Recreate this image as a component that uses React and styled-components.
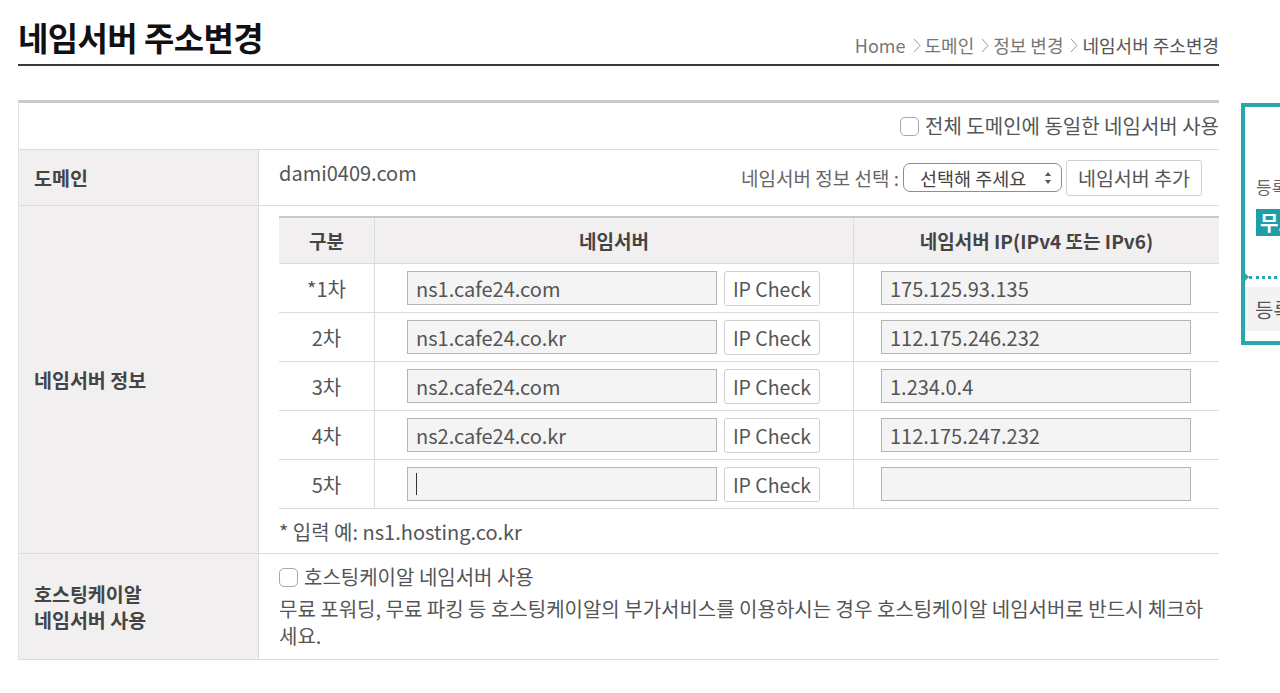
import React from "react";
import styled, { createGlobalStyle } from "styled-components";

const GlobalStyle = createGlobalStyle`
  html, body {
    margin: 0;
    padding: 0;
    background: #fff;
    overflow: hidden;
  }
  body {
    font-family: "Noto Sans CJK KR", "Noto Sans", sans-serif;
    color: #555;
  }
`;

const Page = styled.div`
  display: flex;
  align-items: flex-start;
  padding-left: 18px;
  width: 1500px;
`;

const Main = styled.div`
  width: 1201px;
  flex-shrink: 0;
`;

const Header = styled.div`
  display: flex;
  align-items: flex-end;
  justify-content: space-between;
  height: 66px;
  border-bottom: 2px solid #3a3a3a;
  box-sizing: border-box;
  padding-bottom: 6px;
`;

const Title = styled.h1`
  margin: 0;
  font-size: 33px;
  font-weight: 700;
  letter-spacing: -0.6px;
  color: #111;
  line-height: 42px;
`;

const Breadcrumb = styled.div`
  display: flex;
  align-items: center;
  gap: 3px;
  font-size: 18px;
  color: #777;
  line-height: 24px;
  padding-bottom: 1px;

  span:last-child {
    color: #555;
  }

  svg {
    margin: 0 1px 0 4px;
  }
`;

const Board = styled.div`
  margin-top: 34px;
  border-top: 3px solid #c9c9c9;
  border-left: 1px solid #e2e2e2;
`;

const TopRow = styled.div`
  height: 46px;
  border-bottom: 1px solid #dcdcdc;
  display: flex;
  align-items: center;
  justify-content: flex-end;
`;

const Row = styled.div`
  display: grid;
  grid-template-columns: 240px 1fr;
  border-bottom: 1px solid #dcdcdc;
  min-height: ${(props) => props.height}px;
`;

const Label = styled.div`
  background: #f1efef;
  border-right: 1px solid #dcdcdc;
  display: flex;
  align-items: center;
  padding-left: 15px;
  font-size: 19.5px;
  font-weight: 700;
  color: #444;
  line-height: 26px;
`;

const Value = styled.div`
  padding: ${(props) => props.pad || "0 0 0 20px"};
  display: flex;
  flex-direction: column;
  justify-content: ${(props) => (props.top ? "flex-start" : "center")};
  font-size: 20px;
  color: #555;
`;

const DomainLine = styled.div`
  display: flex;
  align-items: center;
  justify-content: space-between;
  padding-right: 17px;
`;

const DomainName = styled.span`
  margin-top: -10px;
  font-size: 20px;
  color: #555;
`;

const Picker = styled.div`
  display: flex;
  align-items: center;
  font-size: 19px;
  color: #666;
`;

const Select = styled.div`
  width: 159px;
  height: 29px;
  box-sizing: border-box;
  border: 1px solid #8d8d8d;
  border-radius: 7px;
  margin-left: 4px;
  display: flex;
  align-items: center;
  justify-content: space-between;
  padding: 0 9px 0 16px;
  font-size: 18.5px;
  color: #444;
  background: #fff;
`;

const Button = styled.button`
  height: ${(props) => props.h || 35}px;
  width: ${(props) => props.w}px;
  box-sizing: border-box;
  border: 1px solid #cfcfcf;
  border-radius: 3px;
  background: #fff;
  font-family: inherit;
  font-size: 19.5px;
  color: #555;
  padding: 0;
  margin-left: ${(props) => props.ml || 0}px;
  flex-shrink: 0;
`;

const CheckLabel = styled.label`
  display: flex;
  align-items: center;
  gap: 6px;
  font-size: 20px;
  color: #555;
  line-height: 26px;
`;

const CheckBox = styled.span`
  width: 19px;
  height: 19px;
  box-sizing: border-box;
  border: 1px solid #a8a8a8;
  border-radius: 5px;
  background: #fff;
  display: inline-block;
`;

const Grid = styled.div`
  margin-top: 10px;
  border-top: 2px solid #c9c9c9;
`;

const GridRow = styled.div`
  display: grid;
  grid-template-columns: 96px 479px 1fr;
  height: ${(props) => (props.head ? 45 : 48)}px;
  border-bottom: 1px solid #dcdcdc;
  background: ${(props) => (props.head ? "#f1efef" : "#fff")};
  font-weight: ${(props) => (props.head ? 700 : 400)};
  color: ${(props) => (props.head ? "#444" : "#555")};
`;

const Cell = styled.div`
  display: flex;
  align-items: center;
  justify-content: ${(props) => (props.left ? "flex-start" : "center")};
  padding-left: ${(props) => props.pl || 0}px;
  border-right: ${(props) => (props.last ? "none" : "1px solid #dcdcdc")};
  font-size: ${(props) => (props.head ? 19 : 20)}px;
`;

const Field = styled.div`
  width: 310px;
  height: 34px;
  box-sizing: border-box;
  border: 1px solid #b4b4b4;
  background: #f4f4f4;
  display: flex;
  align-items: center;
  padding-left: 8px;
  font-size: 20px;
  color: #555;
  flex-shrink: 0;
`;

const Caret = styled.span`
  width: 1px;
  height: 22px;
  background: #333;
`;

const Note = styled.div`
  height: 44px;
  display: flex;
  align-items: center;
  font-size: 20px;
  color: #555;
`;

const Desc = styled.p`
  margin: 5px 0 0;
  font-size: 20px;
  line-height: 27px;
  color: #555;
  padding-right: 2px;
`;

const Side = styled.div`
  margin-left: 22px;
  margin-top: 103px;
  width: 220px;
  height: 242px;
  box-sizing: border-box;
  border: 4px solid #26a8ad;
  flex-shrink: 0;
  padding: 67px 10px 0 11px;
  font-size: 17px;
  color: #666;
`;

const SideBadge = styled.div`
  margin-top: 10px;
  background: #1f9ea8;
  color: #fff;
  font-weight: 700;
  font-size: 20px;
  height: 27px;
  line-height: 27px;
  padding-left: 4px;
`;

const SideDots = styled.div`
  margin: 40px -10px 0 -7px;
  border-top: 3px dotted #26a8ad;
  position: relative;

  &::before {
    content: "";
    position: absolute;
    left: -5px;
    top: -7px;
    border-top: 5px solid transparent;
    border-bottom: 5px solid transparent;
    border-left: 5px solid #26a8ad;
  }
`;

const SideFoot = styled.div`
  margin: 8px -10px 0 -11px;
  background: #f3f3f3;
  height: 44px;
  display: flex;
  align-items: center;
  padding-left: 10px;
  font-size: 20px;
  color: #555;
`;

const Chevron = () => (
  <svg width="8" height="17" viewBox="0 0 8 17">
    <path d="M1 2 L7 8.5 L1 15" fill="none" stroke="#999" strokeWidth="1" />
  </svg>
);

const Arrows = () => (
  <svg width="8" height="14" viewBox="0 0 8 14">
    <path d="M4 1 L7 5 L1 5 Z" fill="#555" />
    <path d="M4 13 L7 9 L1 9 Z" fill="#555" />
  </svg>
);

const servers = [
  { no: "*1차", name: "ns1.cafe24.com", ip: "175.125.93.135" },
  { no: "2차", name: "ns1.cafe24.co.kr", ip: "112.175.246.232" },
  { no: "3차", name: "ns2.cafe24.com", ip: "1.234.0.4" },
  { no: "4차", name: "ns2.cafe24.co.kr", ip: "112.175.247.232" },
  { no: "5차", name: "", ip: "", focus: true },
];

export default function App() {
  return (
    <>
      <GlobalStyle />
      <Page>
        <Main>
          <Header>
            <Title>네임서버 주소변경</Title>
            <Breadcrumb>
              <span>Home</span>
              <Chevron />
              <span>도메인</span>
              <Chevron />
              <span>정보 변경</span>
              <Chevron />
              <span>네임서버 주소변경</span>
            </Breadcrumb>
          </Header>

          <Board>
            <TopRow>
              <CheckLabel>
                <CheckBox />
                전체 도메인에 동일한 네임서버 사용
              </CheckLabel>
            </TopRow>

            <Row height={55}>
              <Label>도메인</Label>
              <Value>
                <DomainLine>
                  <DomainName>dami0409.com</DomainName>
                  <Picker>
                    네임서버 정보 선택 :
                    <Select>
                      선택해 주세요
                      <Arrows />
                    </Select>
                    <Button w={136} h={36} ml={4}>
                      네임서버 추가
                    </Button>
                  </Picker>
                </DomainLine>
              </Value>
            </Row>

            <Row height={347}>
              <Label>네임서버 정보</Label>
              <Value top>
                <Grid>
                  <GridRow head>
                    <Cell head>구분</Cell>
                    <Cell head>네임서버</Cell>
                    <Cell head last>
                      네임서버 IP(IPv4 또는 IPv6)
                    </Cell>
                  </GridRow>
                  {servers.map((s) => (
                    <GridRow key={s.no}>
                      <Cell>{s.no}</Cell>
                      <Cell left pl={32}>
                        <Field>{s.focus ? <Caret /> : s.name}</Field>
                        <Button w={96} ml={7}>
                          IP Check
                        </Button>
                      </Cell>
                      <Cell left last pl={27}>
                        <Field>{s.ip}</Field>
                      </Cell>
                    </GridRow>
                  ))}
                </Grid>
                <Note>* 입력 예: ns1.hosting.co.kr</Note>
              </Value>
            </Row>

            <Row height={105}>
              <Label>
                호스팅케이알
                <br />
                네임서버 사용
              </Label>
              <Value top pad="10px 0 0 20px">
                <CheckLabel>
                  <CheckBox />
                  호스팅케이알 네임서버 사용
                </CheckLabel>
                <Desc>
                  무료 포워딩, 무료 파킹 등 호스팅케이알의 부가서비스를 이용하시는 경우 호스팅케이알 네임서버로 반드시 체크하세요.
                </Desc>
              </Value>
            </Row>
          </Board>
        </Main>

        <Side>
          등록 가능한 도메인
          <SideBadge>무료 도메인</SideBadge>
          <SideDots />
          <SideFoot>등록하기</SideFoot>
        </Side>
      </Page>
    </>
  );
}
